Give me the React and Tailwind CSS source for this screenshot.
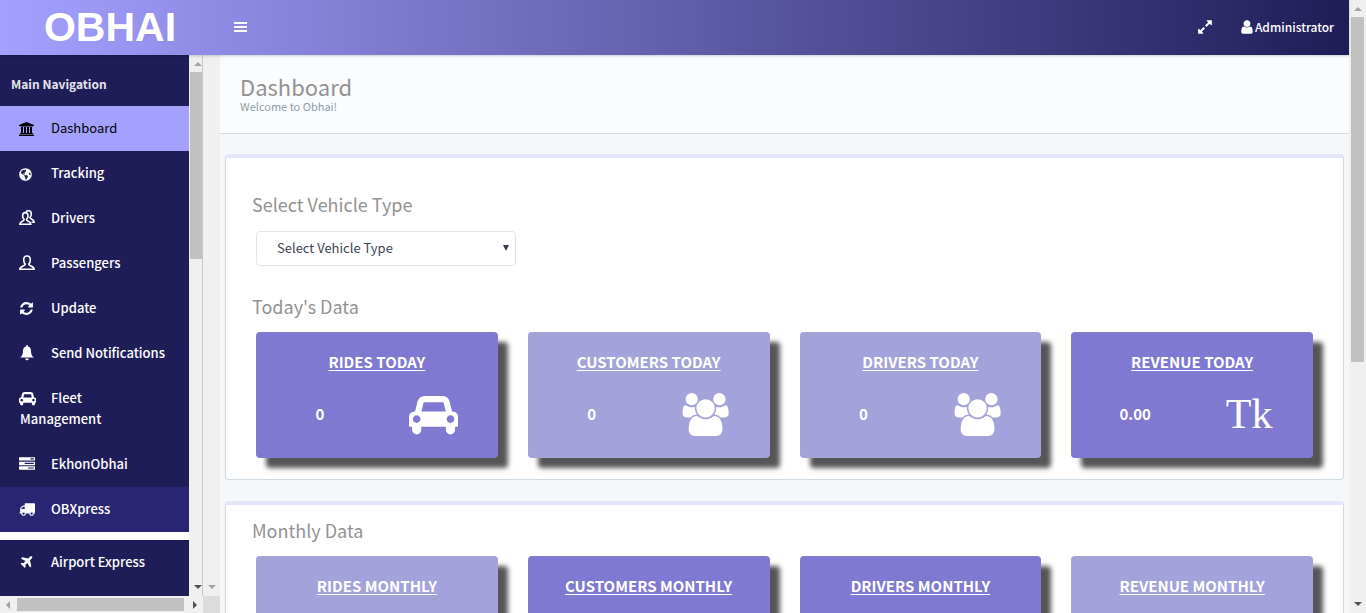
import React from "react";
import { FaGlobeAmericas } from "react-icons/fa";

const PATHS = {
  university: [1920, "M960 0l960 384v128h-128q0 26-20.5 45t-48.5 19h-1526q-28 0-48.5-19t-20.5-45h-128v-128zm-704 640h256v768h128v-768h256v768h128v-768h256v768h128v-768h256v768h59q28 0 48.5 19t20.5 45v64h-1664v-64q0-26 20.5-45t48.5-19h59v-768zm1595 960q28 0 48.5 19t20.5 45v128h-1920v-128q0-26 20.5-45t48.5-19h1782z"],
  refresh: [1792, "M1639 1056q0 5-1 7-64 268-268 434.5t-478 166.5q-146 0-282.5-55t-243.5-157l-129 129q-19 19-45 19t-45-19-19-45v-448q0-26 19-45t45-19h448q26 0 45 19t19 45-19 45l-137 137q71 66 161 102t187 36q134 0 250-65t186-179q11-17 53-117 8-23 30-23h192q13 0 22.5 9.5t9.5 22.5zm25-800v448q0 26-19 45t-45 19h-448q-26 0-45-19t-19-45 19-45l138-138q-148-137-349-137-134 0-250 65t-186 179q-11 17-53 117-8 23-30 23h-199q-13 0-22.5-9.5t-9.5-22.5v-7q65-268 270-434.5t480-166.5q146 0 284 55.5t245 156.5l130-129q19-19 45-19t45 19 19 45z"],
  bell: [1792, "M896 0q-95 0-95 95v60C560 200 448 400 448 640c0 420-120 620-320 768h1536c-200-148-320-348-320-768 0-240-112-440-353-485v-60q0-95-95-95zM704 1500h384q0 210-192 210t-192-210z"],
  car: [2048, "M480 1088q0-66-47-113t-113-47-113 47-47 113 47 113 113 47 113-47 47-113zm36-320h1016l-89-357q-2-8-14-17.5t-21-9.5h-768q-9 0-21 9.5t-14 17.5zm1372 320q0-66-47-113t-113-47-113 47-47 113 47 113 113 47 113-47 47-113zm160-96v384q0 14-9 23t-23 9h-96v128q0 80-56 136t-136 56-136-56-56-136v-128h-1024v128q0 80-56 136t-136 56-136-56-56-136v-128h-96q-14 0-23-9t-9-23v-384q0-93 65.5-158.5t158.5-65.5h28l105-419q23-94 104-157.5t179-63.5h768q98 0 179 63.5t104 157.5l105 419h28q93 0 158.5 65.5t65.5 158.5z"],
  tasks: [1792, "M1024 1408h640v-128h-640v128zm-384-512h1024v-128h-1024v128zm640-512h384v-128h-384v128zm512 832v256q0 26-19 45t-45 19h-1664q-26 0-45-19t-19-45v-256q0-26 19-45t45-19h1664q26 0 45 19t19 45zm0-512v256q0 26-19 45t-45 19h-1664q-26 0-45-19t-19-45v-256q0-26 19-45t45-19h1664q26 0 45 19t19 45zm0-512v256q0 26-19 45t-45 19h-1664q-26 0-45-19t-19-45v-256q0-26 19-45t45-19h1664q26 0 45 19t19 45z"],
  truck: [1792, "M640 1408q0-52-38-90t-90-38-90 38-38 90 38 90 90 38 90-38 38-90zm-384-512h384v-256h-158q-13 0-22 9l-195 195q-9 9-9 22v30zm1280 512q0-52-38-90t-90-38-90 38-38 90 38 90 90 38 90-38 38-90zm256-1088v1024q0 15-4 26.5t-13.5 18.5-16.5 11.5-23.5 6-22.5 2-25.5 0-22.5-.5q0 106-75 181t-181 75-181-75-75-181h-384q0 106-75 181t-181 75-181-75-75-181h-64q-3 0-22.5.5t-25.5 0-22.5-2-23.5-6-16.5-11.5-13.5-18.5-4-26.5q0-26 19-45t45-19v-320q0-8-.5-35t0-38 2.5-34.5 6.5-37 14-30.5 22.5-30l198-198q19-19 50.5-32t58.5-13h160v-192q0-26 19-45t45-19h1024q26 0 45 19t19 45z"],
  plane: [1792, "M1568 160q44 52 12 148t-108 172l-161 161 160 696q5 19-12 33l-128 96q-7 6-19 6-4 0-7-1-15-3-21-16l-279-508-259 259 53 194q5 17-8 31l-96 96q-9 9-23 9h-2q-15-2-24-13l-189-252-252-189q-11-7-13-23-1-13 9-25l96-97q9-9 23-9 6 0 8 1l194 53 259-259-508-279q-14-8-17-24-2-16 9-27l128-128q14-13 30-8l665 159 160-160q76-76 172-108t148 12z"],
  expand: [1792, "M883 1056q0 13-10 23l-332 332 144 144q19 19 19 45t-19 45-45 19h-448q-26 0-45-19t-19-45v-448q0-26 19-45t45-19 45 19l144 144 332-332q10-10 23-10t23 10l114 114q10 10 10 23zm781-864v448q0 26-19 45t-45 19-45-19l-144-144-332 332q-10 10-23 10t-23-10l-114-114q-10-10-10-23t10-23l332-332-144-144q-19-19-19-45t19-45 45-19h448q26 0 45 19t19 45z"],
  user: [1792, "M1536 1399q0 109-62.5 187t-150.5 78h-854q-88 0-150.5-78t-62.5-187q0-85 8.5-160.5t31.5-152 58.5-131 94-89 134.5-34.5q131 128 313 128t313-128q76 0 134.5 34.5t94 89 58.5 131 31.5 152 8.5 160.5zm-256-887q0 159-112.5 271.5t-271.5 112.5-271.5-112.5-112.5-271.5 112.5-271.5 271.5-112.5 271.5 112.5 112.5 271.5z"],
  users: [2048, "M657 896q-162 5-265 128h-134q-82 0-138-40.5t-56-118.5q0-353 124-353 6 0 43.5 21t97.5 42.5 119 21.5q67 0 133-23-5 37-5 66 0 139 81 256zm1071 637q0 120-73 189.5t-194 69.5h-874q-121 0-194-69.5t-73-189.5q0-53 3.5-103.5t14-109 26.5-108.5 43-97.5 62-81 85.5-53.5 111.5-20q10 0 43 21.5t73 48 107 48 135 21.5 135-21.5 107-48 73-48 43-21.5q61 0 111.5 20t85.5 53.5 62 81 43 97.5 26.5 108.5 14 109 3.5 103.5zm-1024-1277q0 106-75 181t-181 75-181-75-75-181 75-181 181-75 181 75 75 181zm704 384q0 159-112.5 271.5t-271.5 112.5-271.5-112.5-112.5-271.5 112.5-271.5 271.5-112.5 271.5 112.5 112.5 271.5zm576 225q0 78-56 118.5t-138 40.5h-134q-103-123-265-128 81-117 81-256 0-29-5-66 66 23 133 23 59 0 119-21.5t97.5-42.5 43.5-21q124 0 124 353zm-128-609q0 106-75 181t-181 75-181-75-75-181 75-181 181-75 181 75 75 181z"],
};

function Icon({ name, className }) {
  const [width, d] = PATHS[name];
  return (
    <svg viewBox={`0 0 ${width} 1792`} className={className} fill="currentColor" aria-hidden="true">
      <path d={d} />
    </svg>
  );
}

function PersonOutline({ pair }) {
  return (
    <svg viewBox="0 0 16 16" className="h-4 w-4" fill="none" stroke="currentColor" strokeWidth="1.6" aria-hidden="true">
      {pair ? (
        <>
          <path d="M6.300 2.600C4.400 2.600 3.600 4 3.600 5.800c0 1.600.6 2.900 1.500 3.600 0 2.100-4.100 1.500-4.300 4.900h11c-.2-3.400-4.300-2.800-4.300-4.900.9-.7 1.500-2 1.500-3.600C9 4 8.200 2.600 6.300 2.600z" />
          <path d="M7 1.800C7.500 1 8.400.8 9.500.8c2 0 2.800 1.500 2.800 3.200 0 1.500-.5 2.700-1.300 3.400 0 1.900 4 1.300 4.200 4.900H12.500" />
        </>
      ) : (
        <path d="M8 1C5.600 1 4.700 2.600 4.700 4.800c0 1.900.6 3.400 1.600 4.300 0 2.200-5.200 1.700-5.500 5.200h14.400c-.3-3.500-5.500-3-5.500-5.200 1-.9 1.600-2.400 1.600-4.300C11.300 2.600 10.400 1 8 1z" />
      )}
    </svg>
  );
}

function Arrow({ dir, dark }) {
  const shapes = { up: "0,4 4,0 8,4", down: "0,0 8,0 4,4", left: "4,0 4,8 0,4", right: "0,0 4,4 0,8" };
  const box = dir === "up" || dir === "down" ? "0 0 8 4" : "0 0 4 8";
  const size = dir === "up" || dir === "down" ? "h-1 w-2" : "h-2 w-1";
  return (
    <svg viewBox={box} className={`${size} shrink-0 ${dark ? "text-[#505050]" : "text-[#a3a3a3]"}`} fill="currentColor" aria-hidden="true">
      <polygon points={shapes[dir]} />
    </svg>
  );
}

const small = "h-3.5 w-auto";
const NAV = [
  { label: "Dashboard", icon: <Icon name="university" className={small} />, tone: "bg-[#a4a0ff] text-black font-normal" },
  { label: "Tracking", icon: <FaGlobeAmericas className="h-[13px] w-[13px]" /> },
  { label: "Drivers", icon: <PersonOutline pair /> },
  { label: "Passengers", icon: <PersonOutline /> },
  { label: "Update", icon: <Icon name="refresh" className="h-[15px] w-auto" /> },
  { label: "Send Notifications", icon: <Icon name="bell" className="h-4 w-4" /> },
  { label: "Fleet Management", icon: <Icon name="car" className="h-[15px] w-auto" /> },
  { label: "EkhonObhai", icon: <Icon name="tasks" className="h-4 w-4" /> },
  { label: "OBXpress", icon: <Icon name="truck" className="h-4 w-4" />, tone: "bg-[#2a2673] text-white font-medium" },
  { label: "Airport Express", icon: <Icon name="plane" className="h-[15px] w-auto" />, gap: true },
];

function NavItem({ label, icon, gap, tone = "text-white font-medium" }) {
  return (
    <li className={gap ? "border-t-8 border-white" : ""}>
      <a href="#" className={`block pt-[11px] pr-6 pb-[13px] pl-5 text-[13px] leading-[21px] ${tone}`}>
        <span className="mr-3 -ml-px inline-flex h-4 w-5 items-center align-[-3px]">{icon}</span>
        {label}
      </a>
    </li>
  );
}

function Sidebar() {
  return (
    <aside className="flex w-[220px] shrink-0 flex-col">
      <div className="flex min-h-0 flex-1">
        <nav className="min-w-0 flex-1 overflow-hidden bg-[#1f1d57]">
          <h2 className="px-[11px] pt-[19px] pb-3 text-[12px] leading-5 font-bold text-[#e4e4ec]">Main Navigation</h2>
          <ul>
            {NAV.map((item) => (
              <NavItem key={item.label} {...item} />
            ))}
          </ul>
        </nav>
        <div className="flex w-3.5 shrink-0 flex-col items-end justify-between border-r border-[#c8c8c8] bg-[#f0f0f0] pt-[7px] pb-[7px]">
          <Arrow dir="up" />
          <div className="mt-1.5 h-[187px] w-3 bg-[#c1c1c1]" />
          <div className="flex-1" />
          <Arrow dir="down" dark />
        </div>
        <div className="flex w-[17px] shrink-0 flex-col items-center justify-end bg-[#f0f0f0] pb-[7px]">
          <Arrow dir="down" />
        </div>
      </div>
      <div className="flex h-[17px] shrink-0 bg-[#dcdcdc]">
        <div className="flex w-[203px] items-center bg-[#f0f0f0] px-1.5">
          <Arrow dir="left" />
          <div className="mr-[9px] ml-[7px] h-[13px] flex-1 bg-[#c1c1c1]" />
          <Arrow dir="right" dark />
        </div>
      </div>
    </aside>
  );
}

function StatCard({ title, value, icon, dark }) {
  return (
    <article
      className={`rounded px-[15px] pt-5 pb-5 text-white shadow-[10px_10px_5px_#555] ${dark ? "bg-[#7f79d2]" : "bg-[#a3a2db]"}`}
    >
      <h3 className="text-center text-[15px] leading-5 font-bold underline underline-offset-2">{title}</h3>
      <div className="mt-[18px] grid h-12 grid-cols-2 items-center">
        <span className="pr-2 text-center text-[15px] leading-5 font-bold">{value}</span>
        <span className="flex justify-center pl-2">{icon}</span>
      </div>
    </article>
  );
}

const big = "h-[43px] w-auto";
const taka = <span className="font-['Liberation_Serif',serif] text-[42px] leading-[48px]">Tk</span>;
const carIcon = <Icon name="car" className={big} />;
const usersIcon = <Icon name="users" className={big} />;

function Panel({ children, className }) {
  return (
    <section className={`rounded border border-t-4 border-[#cfdbe2] border-t-[#e6e6fa] bg-white ${className}`}>
      {children}
    </section>
  );
}

function PanelTitle({ children }) {
  return <h2 className="px-[26px] text-[18px] leading-6 text-[#929292]">{children}</h2>;
}

function CardGrid({ children }) {
  return <div className="grid grid-cols-4 gap-[30px] px-[30px]">{children}</div>;
}

export default function App() {
  return (
    <div className="flex h-screen overflow-hidden bg-[#f5f7fa] font-['Noto_Sans_CJK_SC',sans-serif]">
      <div className="flex min-w-0 flex-1 flex-col">
        <header className="z-10 flex h-[55px] shrink-0 items-center bg-linear-to-r/srgb from-[#a4a0ff] to-[#1f1d57] text-white shadow-[0_1px_3px_rgba(0,0,0,0.2)]">
          <a href="#" className="w-[220px] text-center font-['Liberation_Sans',sans-serif] text-[41px] leading-[55px] font-bold">
            OBHAI
          </a>
          <button type="button" aria-label="Toggle menu" className="ml-3.5 pb-0.5">
            <svg viewBox="0 0 13 10" preserveAspectRatio="none" className="h-2.5 w-[13px]" fill="currentColor" aria-hidden="true">
              <path d="M0 0h13v2H0zM0 4h13v2H0zM0 8h13v2H0z" />
            </svg>
          </button>
          <div className="ml-auto flex items-center gap-[26px] pr-[15px] pb-0.5 text-[12px] leading-5 font-medium">
            <button type="button" aria-label="Full screen">
              <Icon name="expand" className="h-4 w-4" />
            </button>
            <a href="#" className="flex items-center">
              <Icon name="user" className="h-4 w-4" />
              Administrator
            </a>
          </div>
        </header>
        <div className="flex min-h-0 flex-1">
          <Sidebar />
          <main className="min-w-0 flex-1 overflow-hidden">
            <div className="h-[79px] border-b border-[#cfdbe2] bg-[#fafcfe] px-5 pt-[17px]">
              <h1 className="text-[22px] leading-7 text-[#929292]">Dashboard</h1>
              <p className="text-[11px] leading-3 text-[#909fa7]">Welcome to Obhai!</p>
            </div>
            <div className="px-[5px] pt-5">
              <Panel className="pt-[34px] pb-[21px]">
                <PanelTitle>
                  <label htmlFor="vehicle">Select Vehicle Type</label>
                </PanelTitle>
                <div className="relative mt-[15px] ml-[30px] w-[260px]">
                  <select
                    id="vehicle"
                    className="h-[35px] w-full appearance-none rounded border border-[#dde6e9] bg-white pb-0.5 pl-5 text-[13px] leading-5 text-[#3a3f51]"
                  >
                    <option>Select Vehicle Type</option>
                  </select>
                  <svg viewBox="0 0 6 6" className="pointer-events-none absolute top-3.5 right-[7px] h-1.5 w-1.5" fill="#3a3f51" aria-hidden="true">
                    <path d="M0 0h6L3 6z" />
                  </svg>
                </div>
                <div className="mt-7 mb-3.5">
                  <PanelTitle>Today's Data</PanelTitle>
                </div>
                <CardGrid>
                  <StatCard title="RIDES TODAY" value="0" icon={carIcon} dark />
                  <StatCard title="CUSTOMERS TODAY" value="0" icon={usersIcon} />
                  <StatCard title="DRIVERS TODAY" value="0" icon={usersIcon} />
                  <StatCard title="REVENUE TODAY" value="0.00" icon={taka} dark />
                </CardGrid>
              </Panel>
              <Panel className="mt-[21px] pt-[13px] pb-[21px]">
                <div className="mb-3.5">
                  <PanelTitle>Monthly Data</PanelTitle>
                </div>
                <CardGrid>
                  <StatCard title="RIDES MONTHLY" value="0" icon={carIcon} />
                  <StatCard title="CUSTOMERS MONTHLY" value="0" icon={usersIcon} dark />
                  <StatCard title="DRIVERS MONTHLY" value="0" icon={usersIcon} dark />
                  <StatCard title="REVENUE MONTHLY" value="0.00" icon={taka} />
                </CardGrid>
              </Panel>
            </div>
          </main>
        </div>
      </div>
      <div className="flex w-[17px] shrink-0 flex-col items-center bg-[#f0f0f0] py-[7px]">
        <Arrow dir="up" />
        <div className="mt-1.5 h-[345px] w-[13px] bg-[#c1c1c1]" />
        <div className="flex-1" />
        <Arrow dir="down" dark />
      </div>
    </div>
  );
}
